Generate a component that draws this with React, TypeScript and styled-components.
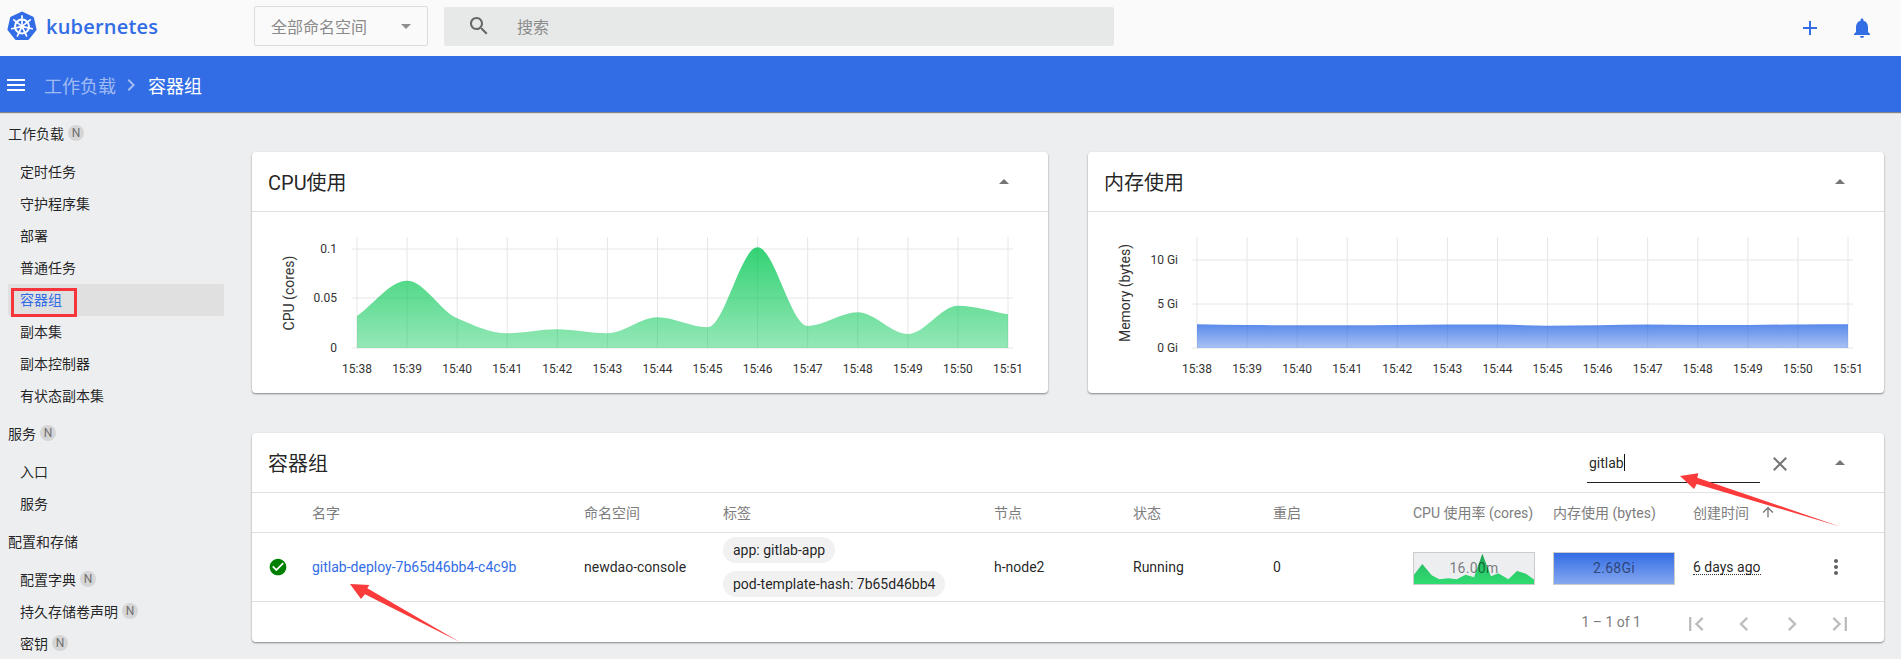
import React from "react";
import styled, { createGlobalStyle } from "styled-components";

const Global = createGlobalStyle`
  html, body { margin: 0; padding: 0; height: 100%; overflow: hidden; background: #edeef0; }
  body { font-family: Roboto, "Noto Sans CJK SC", sans-serif; color: rgba(0,0,0,.87); font-size: 14px; }
  * { box-sizing: border-box; }
`;

const Page = styled.div`
  position: relative;
  width: 1901px;
  height: 659px;
  overflow: hidden;
  display: flex;
  flex-direction: column;
`;

const TopBar = styled.header`
  flex: none;
  height: 56px;
  background: #fafafa;
  display: flex;
  align-items: center;
  padding: 0 27px 4px 7px;
`;
const Brand = styled.div`
  width: 247px;
  display: flex;
  align-items: center;
  gap: 9px;
`;
const BrandText = styled.span`
  font-family: "Open Sans", sans-serif;
  font-weight: 600;
  font-size: 20px;
  letter-spacing: .2px;
  color: #326de6;
  line-height: 1;
  padding-top: 1px;
`;
const NamespaceSelect = styled.div`
  width: 174px;
  height: 40px;
  border: 1px solid #ddd;
  border-radius: 2px;
  display: flex;
  align-items: center;
  justify-content: space-between;
  padding: 0 9px 0 16px;
  font-size: 16px;
  color: #8a8a8a;
`;
const SearchBox = styled.div`
  width: 670px;
  height: 39px;
  margin-left: 16px;
  background: #e7e9e9;
  border-radius: 2px;
  display: flex;
  align-items: center;
  padding-left: 23px;
  gap: 26px;
  font-size: 16px;
  color: #8a8a8a;
`;
const Actions = styled.div`
  margin-left: auto;
  margin-top: 4px;
  display: flex;
  gap: 28px;
`;
const Icon = styled.svg<{ $size?: number; $color?: string }>`
  flex: none;
  display: block;
  width: ${(p) => p.$size ?? 24}px;
  height: ${(p) => p.$size ?? 24}px;
  fill: ${(p) => p.$color ?? "#757575"};
`;

const CrumbBar = styled.div`
  flex: none;
  height: 56px;
  background: #326de6;
  box-shadow: 0 1px 1px rgba(0,0,0,.45);
  position: relative;
  z-index: 1;
  display: flex;
  align-items: center;
  padding: 2px 0 0 4px;
  font-size: 18px;
  color: #fff;
`;
const CrumbParent = styled.span`
  margin: 0 3px 0 16px;
  color: rgba(255,255,255,.55);
`;
const CrumbCurrent = styled.span`
  margin-left: 5px;
`;

const Main = styled.div`
  flex: 1;
  display: flex;
  min-height: 0;
`;
const Sidebar = styled.nav`
  flex: none;
  width: 232px;
  padding: 6px 8px 0;
`;
const Group = styled.div`
  margin-bottom: 6px;
`;
const GroupTitle = styled.div`
  height: 32px;
  margin-bottom: 6px;
  padding-bottom: 2px;
  display: flex;
  align-items: center;
  gap: 4px;
  color: rgba(0,0,0,.87);
`;
const NavItem = styled.div<{ $active?: boolean }>`
  height: 32px;
  display: flex;
  align-items: center;
  gap: 4px;
  padding: 0 0 2px 12px;
  border-radius: 2px;
  color: ${(p) => (p.$active ? "#326de6" : "rgba(0,0,0,.87)")};
  background: ${(p) => (p.$active ? "#e0e0e0" : "transparent")};
`;
const NBadge = styled.span`
  width: 16px;
  height: 16px;
  border-radius: 50%;
  background: #d6d6d6;
  color: #707070;
  font-size: 12px;
  line-height: 16px;
  text-align: center;
`;

const Content = styled.main`
  flex: 1;
  min-width: 0;
  padding: 40px 17px 0 20px;
  display: flex;
  flex-direction: column;
  gap: 40px;
`;
const ChartRow = styled.div`
  display: flex;
  gap: 40px;
`;
const Card = styled.section`
  flex: 1 1 0;
  min-width: 0;
  background: #fff;
  border-radius: 4px;
  box-shadow: 0 1px 2px rgba(0,0,0,.45);
`;
const TableCard = styled(Card)`
  flex: none;
`;
const CardHeader = styled.div`
  height: 60px;
  border-bottom: 1px solid #e0e0e0;
  display: flex;
  align-items: center;
  justify-content: space-between;
  padding: 0 32px 0 16px;
  font-size: 20px;
`;
const ChartSvg = styled.svg`
  display: block;
  width: 796px;
  height: 181px;
  font-family: Roboto, sans-serif;
`;

const FilterArea = styled.div`
  display: flex;
  align-items: center;
`;
const FilterInput = styled.div`
  width: 173px;
  height: 39px;
  margin-top: 1px;
  padding: 0 2px;
  border-bottom: 1px solid #222;
  display: flex;
  align-items: center;
  font-size: 14px;
`;
const Caret = styled.span`
  display: inline-block;
  width: 1px;
  height: 17px;
  background: #111;
`;
const FilterClear = styled.span`
  margin: 2px 36px 0 8px;
`;

const gridColumns = "44px 272px 139px 271px 139px 140px 140px 140px 140px 131px 48px";
const HeadRow = styled.div`
  height: 40px;
  border-bottom: 1px solid #e0e0e0;
  padding: 0 0 2px 16px;
  display: grid;
  grid-template-columns: ${gridColumns};
  align-items: center;
  color: #7d7d7d;
  white-space: nowrap;
`;
const SortCell = styled.div`
  display: flex;
  align-items: center;
  gap: 11px;
`;
const BodyRow = styled.div`
  height: 69px;
  border-bottom: 1px solid #e0e0e0;
  padding-left: 16px;
  display: grid;
  grid-template-columns: ${gridColumns};
  align-items: center;
  white-space: nowrap;
`;
const PodLink = styled.a`
  color: #326de6;
  font-size: 14px;
  text-decoration: none;
`;
const Labels = styled.div`
  display: flex;
  flex-direction: column;
  align-items: flex-start;
  gap: 8px;
`;
const Chip = styled.span`
  height: 26px;
  line-height: 26px;
  padding: 0 10px;
  border-radius: 13px;
  background: #f1f1f1;
`;
const Spark = styled.div<{ $blue?: boolean }>`
  position: relative;
  width: 122px;
  height: 33px;
  margin-top: 2px;
  border: 1px solid #ccc;
  background: ${(p) => (p.$blue ? "linear-gradient(#326de6, #86a8ee)" : "#edeef0")};
  display: flex;
  align-items: center;
  justify-content: center;
  overflow: hidden;
`;
const SparkValue = styled.span`
  position: relative;
  letter-spacing: .3px;
  color: rgba(0,0,0,.5);
`;
const SparkArea = styled.svg`
  position: absolute;
  left: 0;
  top: 0;
  width: 100%;
  height: 100%;
`;
const Ago = styled.span`
  justify-self: start;
  border-bottom: 1px dotted #333;
  line-height: 14px;
`;
const Footer = styled.div`
  height: 40px;
  display: flex;
  align-items: center;
  justify-content: flex-end;
  padding-right: 20px;
  font-size: 14px;
  color: #7d7d7d;
`;
const RangeText = styled.span`
  margin-right: 31px;
`;
const PagerButton = styled.span`
  width: 48px;
  display: flex;
  justify-content: center;
  padding-top: 3px;
`;
const RedBox = styled.div`
  position: absolute;
  left: 11px;
  top: 288px;
  width: 66px;
  height: 29px;
  border: 3px solid #f5343b;
`;
const Arrows = styled.svg`
  position: absolute;
  left: 0;
  top: 0;
  width: 1901px;
  height: 659px;
  pointer-events: none;
`;

const P = {
  search: "M15.5 14h-.79l-.28-.27C15.41 12.59 16 11.11 16 9.5 16 5.91 13.09 3 9.5 3S3 5.91 3 9.5 5.91 16 9.5 16c1.61 0 3.09-.59 4.23-1.57l.27.28v.79l5 4.99L20.49 19l-4.99-5zm-6 0C7.01 14 5 11.99 5 9.5S7.01 5 9.5 5 14 7.01 14 9.5 11.99 14 9.5 14z",
  add: "M19 13h-6v6h-2v-6H5v-2h6V5h2v6h6v2z",
  bell: "M12 22c1.1 0 2-.9 2-2h-4c0 1.1.89 2 2 2zm6-6v-5c0-3.07-1.64-5.64-4.5-6.32V4c0-.83-.67-1.5-1.5-1.5s-1.5.67-1.5 1.5v.68C7.63 5.36 6 7.92 6 11v5l-2 2v1h16v-1l-2-2z",
  menu: "M3 18h18v-2H3v2zm0-5h18v-2H3v2zm0-7v2h18V6H3z",
  right: "M10 6L8.59 7.41 13.17 12l-4.58 4.59L10 18l6-6z",
  left: "M15.41 7.41L14 6l-6 6 6 6 1.41-1.41L10.83 12z",
  first: "M18.41 16.59L13.82 12l4.59-4.59L17 6l-6 6 6 6zM6 6h2v12H6z",
  last: "M5.59 7.41L10.18 12l-4.59 4.59L7 18l6-6-6-6zM16 6h2v12h-2z",
  up: "M7 14l5-5 5 5z",
  down: "M7 10l5 5 5-5z",
  close: "M19 6.41L17.59 5 12 10.59 6.41 5 5 6.41 10.59 12 5 17.59 6.41 19 12 13.41 17.59 19 19 17.59 13.41 12z",
  sort: "M4 12l1.41 1.41L11 7.83V20h2V7.83l5.58 5.59L20 12l-8-8-8 8z",
  more: "M12 8c1.1 0 2-.9 2-2s-.9-2-2-2-2 .9-2 2 .9 2 2 2zm0 2c-1.1 0-2 .9-2 2s.9 2 2 2 2-.9 2-2-.9-2-2-2zm0 6c-1.1 0-2 .9-2 2s.9 2 2 2 2-.9 2-2-.9-2-2-2z",
  check: "M12 2C6.48 2 2 6.48 2 12s4.48 10 10 10 10-4.48 10-10S17.52 2 12 2zm-2 15l-5-5 1.41-1.41L10 14.17l7.59-7.59L19 8l-9 9z",
};

const MI = ({ d, size, color }: { d: string; size?: number; color?: string }) => (
  <Icon viewBox="0 0 24 24" $size={size} $color={color}>
    <path d={d} />
  </Icon>
);

const Logo = () => {
  const cx = 15;
  const cy = 15.4;
  const angles = Array.from({ length: 7 }, (_, i) => (-90 + (i * 360) / 7) * (Math.PI / 180));
  const hept = angles.map((a) => `${cx + 13.6 * Math.cos(a)},${cy + 13.6 * Math.sin(a)}`).join(" ");
  return (
    <svg width="30" height="30" viewBox="0 0 30 30">
      <polygon points={hept} fill="#326de6" stroke="#326de6" strokeWidth="2.6" strokeLinejoin="round" />
      <circle cx={cx} cy={cy} r="7" fill="none" stroke="#fff" strokeWidth="2" />
      <circle cx={cx} cy={cy} r="2" fill="#fff" />
      {angles.map((a, i) => (
        <line
          key={i}
          x1={cx + 2 * Math.cos(a)}
          y1={cy + 2 * Math.sin(a)}
          x2={cx + 10.5 * Math.cos(a)}
          y2={cy + 10.5 * Math.sin(a)}
          stroke="#fff"
          strokeWidth="1.7"
          strokeLinecap="round"
        />
      ))}
    </svg>
  );
};

// Monotone cubic through points, flat at local extremes.
function curve(xs: number[], ys: number[]) {
  const n = xs.length;
  const m = ys.map((y, i) => {
    if (i === 0) return (ys[1] - y) / (xs[1] - xs[0]);
    if (i === n - 1) return (y - ys[n - 2]) / (xs[n - 1] - xs[n - 2]);
    const a = (y - ys[i - 1]) / (xs[i] - xs[i - 1]);
    const b = (ys[i + 1] - y) / (xs[i + 1] - xs[i]);
    return a * b <= 0 ? 0 : (2 * a * b) / (a + b);
  });
  let d = `M${xs[0]} ${ys[0]}`;
  for (let i = 0; i < n - 1; i++) {
    const h = (xs[i + 1] - xs[i]) / 3;
    d += `C${xs[i] + h} ${ys[i] + m[i] * h} ${xs[i + 1] - h} ${ys[i + 1] - m[i + 1] * h} ${xs[i + 1]} ${ys[i + 1]}`;
  }
  return d;
}

const times = ["15:38","15:39","15:40","15:41","15:42","15:43","15:44","15:45","15:46","15:47","15:48","15:49","15:50","15:51"];

type ChartProps = {
  id: string;
  originX: number;
  plotLeft: number;
  values: number[];
  rgb: string;
  yLabel: string;
  yLabelX: number;
  ticks: { y: number; label: string }[];
  tickRight: number;
};

// Coordinates are page pixels; the viewBox moves them into the card.
const AreaChart = ({ id, originX, plotLeft, values, rgb, yLabel, yLabelX, ticks, tickRight }: ChartProps) => {
  const step = 651 / 13;
  const xs = values.map((_, i) => plotLeft + i * step);
  const right = xs[xs.length - 1];
  const line = curve(xs, values);
  const area = `${line}L${right} 348L${plotLeft} 348Z`;
  const label = { fontSize: 12, fill: "#333" };
  return (
    <ChartSvg viewBox={`${originX} 212 796 181`}>
      <defs>
        <linearGradient id={id} x1="0" y1="0" x2="0" y2="1">
          <stop offset="0" stopColor={`rgb(${rgb})`} stopOpacity=".8" />
          <stop offset="1" stopColor={`rgb(${rgb})`} stopOpacity=".42" />
        </linearGradient>
      </defs>
      {ticks.map((t) => (
        <g key={t.label}>
          <line x1={plotLeft - 5} x2={right + 5} y1={t.y} y2={t.y} stroke="#e6e6e6" />
          <text x={tickRight} y={t.y + 4} textAnchor="end" {...label}>{t.label}</text>
        </g>
      ))}
      {xs.map((x, i) => (
        <g key={x}>
          <line x1={x} x2={x} y1={237} y2={348} stroke="#e6e6e6" />
          <text x={x} y={373} textAnchor="middle" {...label}>{times[i]}</text>
        </g>
      ))}
      <path d={area} fill={`url(#${id})`} />
      <text
        transform={`translate(${yLabelX} 293) rotate(-90)`}
        textAnchor="middle"
        fontSize="14"
        fill="#333"
        dy="5"
      >
        {yLabel}
      </text>
    </ChartSvg>
  );
};

const nav = [
  { title: "工作负载", badge: true, items: [
    { t: "定时任务" }, { t: "守护程序集" }, { t: "部署" }, { t: "普通任务" },
    { t: "容器组", active: true }, { t: "副本集" }, { t: "副本控制器" }, { t: "有状态副本集" },
  ]},
  { title: "服务", badge: true, items: [{ t: "入口" }, { t: "服务" }] },
  { title: "配置和存储", badge: false, items: [
    { t: "配置字典", badge: true }, { t: "持久存储卷声明", badge: true }, { t: "密钥", badge: true },
  ]},
] as { title: string; badge: boolean; items: { t: string; active?: boolean; badge?: boolean }[] }[];

export default function App() {
  return (
    <Page>
      <Global />
      <TopBar>
        <Brand>
          <Logo />
          <BrandText>kubernetes</BrandText>
        </Brand>
        <NamespaceSelect>
          全部命名空间
          <MI d={P.down} color="#8f8f8f" />
        </NamespaceSelect>
        <SearchBox>
          <MI d={P.search} color="#666" />
          搜索
        </SearchBox>
        <Actions>
          <MI d={P.add} color="#326de6" />
          <MI d={P.bell} color="#326de6" />
        </Actions>
      </TopBar>

      <CrumbBar>
        <MI d={P.menu} color="#fff" />
        <CrumbParent>工作负载</CrumbParent>
        <MI d={P.right} color="rgba(255,255,255,.55)" />
        <CrumbCurrent>容器组</CrumbCurrent>
      </CrumbBar>

      <Main>
        <Sidebar>
          {nav.map((g) => (
            <Group key={g.title}>
              <GroupTitle>
                {g.title}
                {g.badge && <NBadge>N</NBadge>}
              </GroupTitle>
              {g.items.map((it) => (
                <NavItem key={it.t} $active={it.active}>
                  {it.t}
                  {it.badge && <NBadge>N</NBadge>}
                </NavItem>
              ))}
            </Group>
          ))}
        </Sidebar>

        <Content>
          <ChartRow>
            <Card>
              <CardHeader>
                CPU使用
                <MI d={P.up} />
              </CardHeader>
              <AreaChart
                id="cpuFill"
                originX={252}
                plotLeft={357}
                values={[316, 280.7, 318.3, 333.3, 329.3, 333.3, 317.3, 327.3, 247.3, 326, 312.3, 334, 305.7, 314.3]}
                rgb="0,199,82"
                yLabel="CPU (cores)"
                yLabelX={289}
                tickRight={337}
                ticks={[{ y: 249, label: "0.1" }, { y: 298, label: "0.05" }, { y: 348, label: "0" }]}
              />
            </Card>
            <Card>
              <CardHeader>
                内存使用
                <MI d={P.up} />
              </CardHeader>
              <AreaChart
                id="memFill"
                originX={1088}
                plotLeft={1197}
                values={[324.3, 325, 325.3, 325.3, 325, 324.6, 324.6, 325.7, 325.3, 324.6, 325, 325, 324.4, 324.3]}
                rgb="50,109,230"
                yLabel="Memory (bytes)"
                yLabelX={1125}
                tickRight={1178}
                ticks={[{ y: 260, label: "10 Gi" }, { y: 304, label: "5 Gi" }, { y: 348, label: "0 Gi" }]}
              />
            </Card>
          </ChartRow>

          <TableCard>
            <CardHeader>
              容器组
              <FilterArea>
                <FilterInput>gitlab<Caret /></FilterInput>
                <FilterClear><MI d={P.close} /></FilterClear>
                <MI d={P.up} />
              </FilterArea>
            </CardHeader>
            <HeadRow>
              <span />
              <span>名字</span>
              <span>命名空间</span>
              <span>标签</span>
              <span>节点</span>
              <span>状态</span>
              <span>重启</span>
              <span>CPU 使用率 (cores)</span>
              <span>内存使用 (bytes)</span>
              <SortCell>创建时间<MI d={P.sort} size={16} /></SortCell>
              <span />
            </HeadRow>
            <BodyRow>
              <MI d={P.check} size={20} color="#008000" />
              <PodLink>gitlab-deploy-7b65d46bb4-c4c9b</PodLink>
              <span>newdao-console</span>
              <Labels>
                <Chip>app: gitlab-app</Chip>
                <Chip>pod-template-hash: 7b65d46bb4</Chip>
              </Labels>
              <span>h-node2</span>
              <span>Running</span>
              <span>0</span>
              <Spark>
                <SparkArea viewBox="72 63 360 96" preserveAspectRatio="none">
                  <defs>
                    <linearGradient id="sparkFill" gradientUnits="userSpaceOnUse" x1="0" y1="65" x2="0" y2="159">
                      <stop offset="0" stopColor="#1a9a4d" />
                      <stop offset=".45" stopColor="#2bc568" />
                      <stop offset="1" stopColor="#30dc72" />
                    </linearGradient>
                  </defs>
                  <polygon
                    fill="url(#sparkFill)"
                    points="72,130 97,97 125,132 148,144 175,141 200,144 227,130 252,138 277,65 303,135 325,126 355,144 381,119 408,127 432,145 432,159 72,159"
                  />
                </SparkArea>
                <SparkValue>16.00m</SparkValue>
              </Spark>
              <Spark $blue>
                <SparkValue>2.68Gi</SparkValue>
              </Spark>
              <Ago>6 days ago</Ago>
              <MI d={P.more} color="#616161" />
            </BodyRow>
            <Footer>
              <RangeText>1 – 1 of 1</RangeText>
              <PagerButton><MI d={P.first} size={28} color="#bdbdbd" /></PagerButton>
              <PagerButton><MI d={P.left} size={28} color="#bdbdbd" /></PagerButton>
              <PagerButton><MI d={P.right} size={28} color="#bdbdbd" /></PagerButton>
              <PagerButton><MI d={P.last} size={28} color="#bdbdbd" /></PagerButton>
            </Footer>
          </TableCard>
        </Content>
      </Main>

      <RedBox />
      <Arrows viewBox="0 0 1901 659">
        <polygon fill="#fb3b3b" points="350,584 369.3,585 367.3,588.3 459.3,641.7 365,594.3 361,599" />
        <polygon fill="#fb3b3b" points="1680,476 1698.3,473.3 1697.3,477.7 1840.7,526.7 1696.7,484 1694,489" />
      </Arrows>
    </Page>
  );
}
